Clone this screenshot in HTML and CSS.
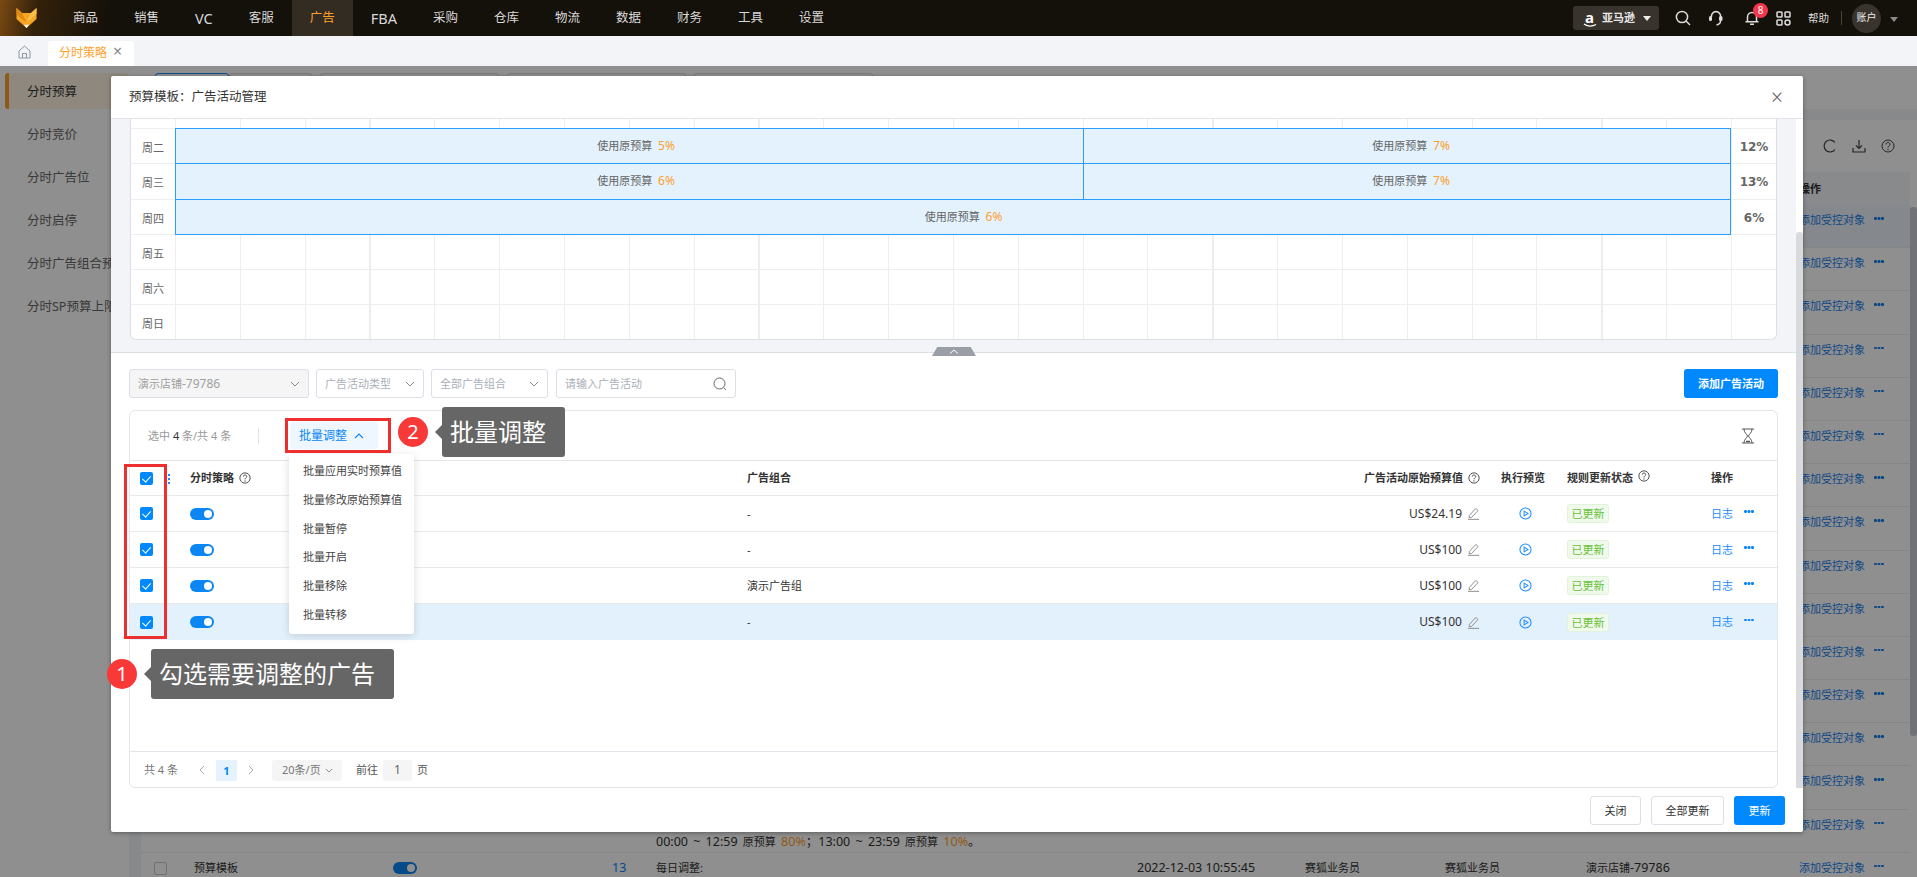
FILE: index.html
```html
<!DOCTYPE html>
<html lang="zh-CN">
<head>
<meta charset="utf-8">
<title>分时策略</title>
<link rel="stylesheet" href="styles.css">
</head>
<body>
<svg class="defs" width="0" height="0">
  <symbol id="help" viewBox="0 0 14 14"><circle cx="7" cy="7" r="6" fill="none" stroke="currentColor" stroke-width="1"/><path d="M5 5.400C5 4.200 5.900 3.500 7 3.500s2 .7 2 1.800c0 1.500-2 1.600-2 3.300" fill="none" stroke="currentColor" stroke-width="1"/><circle cx="7" cy="10.400" r=".7" fill="currentColor"/></symbol>
  <symbol id="pencil" viewBox="0 0 14 14"><path d="M2.500 9.300 8.800 2.200c.5-.5 1-.5 1.500-.1l.9.8c.5.4.5 1 .1 1.500L5 11.200l-2.700.4z" fill="none" stroke="#888" stroke-width="1"/><path d="M1 13.300h12" stroke="#888" stroke-width="1"/></symbol>
  <symbol id="play" viewBox="0 0 14 14"><circle cx="7" cy="7" r="6" fill="none" stroke="#1a8cff" stroke-width="1.100"/><path d="M5.500 4.400 9.700 7l-4.200 2.600z" fill="none" stroke="#1a8cff" stroke-width="1.100"/></symbol>
  <symbol id="chev" viewBox="0 0 10 6"><path d="M1 1l4 4 4-4" fill="none" stroke="currentColor" stroke-width="1"/></symbol>
</svg>

<header class="topbar">
  <svg class="logo" viewBox="0 0 20 20" width="21" height="20"><path d="M0 0l5.500 5h9L20 0v11l-10 9-10-9z" fill="#f5a623"/><path d="M0 0l5.500 5L10 14 5 11 0 6z" fill="#e08a12"/><path d="M20 0l-5.500 5L10 14l5-3 5-5z" fill="#fbbe4a"/><path d="M7.500 16.800 10 20l2.500-3.200z" fill="#fff"/></svg>
  <nav class="nav">
    <a>商品</a><a>销售</a><a class="lat">VC</a><a>客服</a><a class="active">广告</a><a class="lat">FBA</a><a>采购</a><a>仓库</a><a>物流</a><a>数据</a><a>财务</a><a>工具</a><a>设置</a>
  </nav>
  <div class="top-right">
    <div class="market"><span class="amz">a<svg width="14" height="5" viewBox="0 0 14 5"><path d="M1 1c3 2.500 8 2.800 12 .5" fill="none" stroke="#fff" stroke-width="1.300"/></svg></span><span>亚马逊</span><i class="caret"></i></div>
    <svg class="ti ti-search" width="16" height="16" viewBox="0 0 16 16"><circle cx="7" cy="7" r="5.600" fill="none" stroke="#ddd" stroke-width="1.500"/><path d="M11 11l4 4" stroke="#ddd" stroke-width="1.500"/></svg>
    <svg class="ti ti-head" width="16" height="16" viewBox="0 0 16 16"><path d="M3.500 7A4.700 4.700 0 0 1 8 1.500 4.700 4.700 0 0 1 12.500 7" fill="none" stroke="#ddd" stroke-width="1.500"/><rect x="1" y="6" width="3" height="5" rx="1.500" fill="#ddd"/><rect x="11" y="6" width="3.500" height="5" rx="1.500" fill="#ddd"/><path d="M12.500 11c0 2.500-1.500 3.500-4 4" fill="none" stroke="#ddd" stroke-width="1.500"/></svg>
    <div class="bell">
      <svg width="16" height="16" viewBox="0 0 16 16"><path d="M3.500 11.500V7a4.500 4.500 0 0 1 9 0v4.500M1.500 11.800h13M6 14.300h4" fill="none" stroke="#ddd" stroke-width="1.500"/></svg>
      <b class="badge">8</b>
    </div>
    <svg class="ti ti-grid" width="15" height="15" viewBox="0 0 15 15"><g fill="none" stroke="#ddd" stroke-width="1.500"><rect x="1" y="1" width="5" height="5" rx=".8"/><rect x="9" y="1" width="5" height="5" rx=".8"/><rect x="1" y="9" width="5" height="5" rx=".8"/><circle cx="11.500" cy="11.500" r="2.500"/></g></svg>
    <span class="help-link">帮助</span>
    <i class="vline"></i>
    <span class="avatar">账户</span>
    <i class="caret caret-dim"></i>
  </div>
</header>

<div class="tabbar">
  <svg class="home" width="13" height="14" viewBox="0 0 13 14"><path d="M1 6l5.500-5L12 6v7H1z" fill="none" stroke="#8d95a3"/><path d="M4.500 13V8.500h4V13" fill="none" stroke="#8d95a3"/></svg>
  <div class="tab">分时策略<span class="tab-x">×</span></div>
</div>

<main class="page">
  <aside class="side">
    <a class="on">分时预算</a><a>分时竞价</a><a>分时广告位</a><a>分时启停</a><a>分时广告组合预算</a><a>分时SP预算上限</a>
  </aside>
  <section class="content">
    <div class="content-head"><span class="ctab ctab-on"></span><span class="ctab ctab-b"></span><span class="ctab ctab-c"></span><span class="ctab ctab-c"></span><span class="ctab ctab-c"></span></div>
    <div class="bg-card">
      <div class="bg-main">
        <div class="bg-tools">
          <svg width="14" height="14" viewBox="0 0 14 14"><path d="M12 3.500A6 6 0 1 0 12 10.500" fill="none" stroke="#444" stroke-width="1.200"/></svg>
          <svg width="14" height="14" viewBox="0 0 14 14"><path d="M7 1v8M4 6.500 7 9.500l3-3M1 9v4h12V9" fill="none" stroke="#444" stroke-width="1.200"/></svg>
          <svg width="14" height="14" class="bg-help"><use href="#help"/></svg>
        </div>
        <div class="bg-head"><span class="bg-action">操作</span></div>
        <div class="bg-row bg-hover"><span class="bg-action"><a>添加受控对象</a><i class="more"></i></span></div>
        <div class="bg-row"><span class="bg-action"><a>添加受控对象</a><i class="more"></i></span></div>
        <div class="bg-row"><span class="bg-action"><a>添加受控对象</a><i class="more"></i></span></div>
        <div class="bg-row"><span class="bg-action"><a>添加受控对象</a><i class="more"></i></span></div>
        <div class="bg-row"><span class="bg-action"><a>添加受控对象</a><i class="more"></i></span></div>
        <div class="bg-row"><span class="bg-action"><a>添加受控对象</a><i class="more"></i></span></div>
        <div class="bg-row"><span class="bg-action"><a>添加受控对象</a><i class="more"></i></span></div>
        <div class="bg-row"><span class="bg-action"><a>添加受控对象</a><i class="more"></i></span></div>
        <div class="bg-row"><span class="bg-action"><a>添加受控对象</a><i class="more"></i></span></div>
        <div class="bg-row"><span class="bg-action"><a>添加受控对象</a><i class="more"></i></span></div>
        <div class="bg-row"><span class="bg-action"><a>添加受控对象</a><i class="more"></i></span></div>
        <div class="bg-row"><span class="bg-action"><a>添加受控对象</a><i class="more"></i></span></div>
        <div class="bg-row"><span class="bg-action"><a>添加受控对象</a><i class="more"></i></span></div>
        <div class="bg-row"><span class="bg-action"><a>添加受控对象</a><i class="more"></i></span></div>
        <div class="bg-row bg-rule-row">
          <span class="bg-rule">00:00 ~ 12:59 <u>原预算</u> <em>80%</em>；13:00 ~ 23:59 <u>原预算</u> <em>10%</em>。</span>
          <span class="bg-action"><a>添加受控对象</a><i class="more"></i></span>
        </div>
        <div class="bg-row">
          <span class="bg-cb"></span><span>预算模板</span><span class="switch bg-switch"></span><span class="bg-num">13</span><span>每日调整:</span><span class="n">2022-12-03 10:55:45</span><span>赛狐业务员</span><span>赛狐业务员</span><span>演示店铺<b class="n">-79786</b></span>
          <span class="bg-action"><a>添加受控对象</a><i class="more"></i></span>
        </div>
      </div>
      <div class="bg-scroll"><i></i></div>
    </div>
  </section>
</main>

<div class="overlay"></div>

<div class="modal">
  <div class="modal-head"><span>预算模板：广告活动管理</span><span class="modal-x">×</span></div>
  <div class="modal-body">
    <div class="modal-scroll">
      <div class="sched-wrap">
        <div class="sched">
          <div class="wk wk-top"><span class="wk-l"></span><div class="wk-h"></div><span class="wk-p"></span></div>
          <div class="wk"><span class="wk-l">周二</span><div class="wk-h"><div class="blk b14">使用原预算 <em>5%</em></div><div class="blk b10">使用原预算 <em>7%</em></div></div><span class="wk-p">12%</span></div>
          <div class="wk"><span class="wk-l">周三</span><div class="wk-h"><div class="blk b14">使用原预算 <em>6%</em></div><div class="blk b10">使用原预算 <em>7%</em></div></div><span class="wk-p">13%</span></div>
          <div class="wk"><span class="wk-l">周四</span><div class="wk-h"><div class="blk b24">使用原预算 <em>6%</em></div></div><span class="wk-p">6%</span></div>
          <div class="wk"><span class="wk-l">周五</span><div class="wk-h"></div><span class="wk-p"></span></div>
          <div class="wk"><span class="wk-l">周六</span><div class="wk-h"></div><span class="wk-p"></span></div>
          <div class="wk"><span class="wk-l">周日</span><div class="wk-h"></div><span class="wk-p"></span></div>
        </div>
        <div class="collapse"><svg width="10" height="5" viewBox="0 0 10 5"><path d="M1 4.500 5 1l4 3.500" fill="none" stroke="#fff"/></svg></div>
      </div>

      <div class="lower">
        <div class="filters">
          <div class="sel sel-a sel-off"><span>演示店铺<b class="n12">-79786</b></span><svg width="10" height="6"><use href="#chev"/></svg></div>
          <div class="sel sel-b"><span>广告活动类型</span><svg width="10" height="6"><use href="#chev"/></svg></div>
          <div class="sel sel-c"><span>全部广告组合</span><svg width="10" height="6"><use href="#chev"/></svg></div>
          <div class="sel sel-d"><span>请输入广告活动</span><svg width="14" height="14" viewBox="0 0 14 14"><circle cx="6.500" cy="6.500" r="5.500" fill="none" stroke="#666"/><path d="M10.500 10.500 13 13" stroke="#666"/></svg></div>
          <button class="btn-primary btn-add">添加广告活动</button>
        </div>

        <div class="card">
          <div class="toolbar">
            <span class="count">选中 <b>4</b> 条/共 4 条</span>
            <i class="tb-line"></i>
            <div class="batch">批量调整<svg width="10" height="6" viewBox="0 0 10 6"><path d="M1 5l4-4 4 4" fill="none" stroke="#0a86f5" stroke-width="1.100"/></svg></div>
            <svg class="hourglass" width="14" height="16" viewBox="0 0 14 16"><path d="M1 1h12M1 15h12M3 1c0 4 3 5 3.500 7C6 10 3 11 3 15M11 1c0 4-3 5-3.500 7C8 10 11 11 11 15" fill="none" stroke="#555"/><path d="M5 13.500h4" stroke="#555" stroke-width="1.500"/></svg>
          </div>
          <div class="trow thead">
            <span class="c-chk"><i class="cb"></i><i class="vdots"></i></span>
            <span class="c-name">分时策略<svg class="q" width="12" height="12"><use href="#help"/></svg></span>
            <span>广告组合</span>
            <span class="c-budget">广告活动原始预算值<svg class="q" width="12" height="12"><use href="#help"/></svg></span>
            <span class="c-prev">执行预览</span>
            <span>规则更新状态<svg class="q" width="12" height="12"><use href="#help"/></svg></span>
            <span>操作</span>
          </div>
          <div class="trow">
            <span class="c-chk"><i class="cb"></i></span><span class="c-name"><i class="switch"></i></span><span>-</span>
            <span class="c-budget"><b class="amt">US$24.19</b><svg class="pen" width="13" height="13"><use href="#pencil"/></svg></span>
            <span class="c-prev c-prev-i"><svg width="13" height="13"><use href="#play"/></svg></span><span><i class="tag">已更新</i></span>
            <span class="c-op"><a>日志</a><i class="more"></i></span>
          </div>
          <div class="trow">
            <span class="c-chk"><i class="cb"></i></span><span class="c-name"><i class="switch"></i></span><span>-</span>
            <span class="c-budget"><b class="amt">US$100</b><svg class="pen" width="13" height="13"><use href="#pencil"/></svg></span>
            <span class="c-prev c-prev-i"><svg width="13" height="13"><use href="#play"/></svg></span><span><i class="tag">已更新</i></span>
            <span class="c-op"><a>日志</a><i class="more"></i></span>
          </div>
          <div class="trow">
            <span class="c-chk"><i class="cb"></i></span><span class="c-name"><i class="switch"></i></span><span>演示广告组</span>
            <span class="c-budget"><b class="amt">US$100</b><svg class="pen" width="13" height="13"><use href="#pencil"/></svg></span>
            <span class="c-prev c-prev-i"><svg width="13" height="13"><use href="#play"/></svg></span><span><i class="tag">已更新</i></span>
            <span class="c-op"><a>日志</a><i class="more"></i></span>
          </div>
          <div class="trow trow-on">
            <span class="c-chk"><i class="cb"></i></span><span class="c-name"><i class="switch"></i></span><span>-</span>
            <span class="c-budget"><b class="amt">US$100</b><svg class="pen" width="13" height="13"><use href="#pencil"/></svg></span>
            <span class="c-prev c-prev-i"><svg width="13" height="13"><use href="#play"/></svg></span><span><i class="tag">已更新</i></span>
            <span class="c-op"><a>日志</a><i class="more"></i></span>
          </div>
          <div class="tspace"></div>
          <div class="pager">
            <span class="p-total">共 4 条</span>
            <svg class="p-arrow" width="6" height="10" viewBox="0 0 6 10"><path d="M5 1 1 5l4 4" fill="none" stroke="#aaa"/></svg>
            <span class="p-cur">1</span>
            <svg class="p-arrow" width="6" height="10" viewBox="0 0 6 10"><path d="M1 1l4 4-4 4" fill="none" stroke="#aaa"/></svg>
            <span class="p-size">20条/页<svg width="8" height="5"><use href="#chev"/></svg></span>
            <span class="p-go">前往</span><span class="p-in">1</span><span>页</span>
          </div>
        </div>
      </div>
    </div>
    <div class="m-scroll"><i></i></div>
  </div>
  <div class="modal-foot">
    <button class="btn btn-close">关闭</button>
    <button class="btn btn-all">全部更新</button>
    <button class="btn-primary btn-up">更新</button>
  </div>
</div>

<div class="menu">
  <a>批量应用实时预算值</a><a>批量修改原始预算值</a><a>批量暂停</a><a>批量开启</a><a>批量移除</a><a>批量转移</a>
</div>

<div class="redbox rb-batch"></div>
<div class="redbox rb-check"></div>
<div class="dot dot-1">1</div>
<div class="tip tip-1">勾选需要调整的广告</div>
<div class="dot dot-2">2</div>
<div class="tip tip-2">批量调整</div>
</body>
</html>
```

FILE: styles.css
```css
* { box-sizing: border-box; }
html, body { margin: 0; height: 100%; }
body {
  width: 1917px; height: 877px; overflow: hidden; position: relative;
  display: flex; flex-direction: column;
  font: 11px/16px "Noto Sans", "Noto Sans CJK SC", sans-serif;
  color: #333; background: #fff;
}
a { color: inherit; text-decoration: none; }
i, em, b { font-style: normal; }
u { text-decoration: none; font-size: 11px; }
.defs { position: absolute; }
button { font: inherit; cursor: pointer; }
.more {
  display: block; flex: none; width: 2.5px; height: 2.5px; border-radius: 50%; background: currentColor;
  box-shadow: 3.5px 0 currentColor, 7px 0 currentColor;
}

/* top bar */
.topbar {
  height: 36px; flex: none; display: flex; align-items: center;
  background: linear-gradient(100deg, #7a4a12 0, #33210a 38px, #14100a 110px);
  color: #d9d9d9;
}
.logo { margin: 0 18px 0 16px; flex: none; }
.nav { display: flex; height: 36px; }
.nav a { padding: 0 18px; line-height: 36px; font-size: 12.5px; }
.nav .lat { font-size: 14.5px; }
.nav .active { background: #332c22; color: #ff9f2e; }
.top-right { margin-left: auto; display: flex; align-items: center; }
.market {
  width: 86px; height: 24px; margin-right: 16px; padding-left: 10px;
  display: flex; align-items: center; background: #38332c; border-radius: 3px;
  font-size: 11px; font-weight: 700; color: #e8e8e8;
}
.amz { position: relative; width: 19px; font-size: 15px; line-height: 18px; color: #fff; padding-left: 2px; margin-top: -3px; }
.amz svg { position: absolute; left: 0; top: 15px; }
.caret { display: block; width: 0; height: 0; margin-left: 8px; border: 4px solid transparent; border-top: 5px solid #eee; border-bottom: 0; }
.caret-dim { border-top-color: #8a8a8a; margin: 2px 19px 0 9px; }
.ti { flex: none; }
.ti-search { margin-right: 17px; }
.ti-head { margin-right: 20px; }
.bell { position: relative; width: 16px; height: 16px; margin-right: 16px; }
.badge {
  position: absolute; left: 9px; top: -7px; width: 15px; height: 15px; border-radius: 50%;
  background: #f5364a; color: #fff; font-size: 10px; line-height: 15px; font-weight: 400; text-align: center;
}
.ti-grid { margin-right: 17px; }
.help-link { font-size: 10.5px; color: #ddd; }
.vline { width: 1px; height: 14px; background: #444; margin: 0 10px 0 12px; }
.avatar {
  width: 29px; height: 29px; border-radius: 50%; background: #38332c; color: #eee;
  font-size: 10px; line-height: 27px; text-align: center;
}

/* tab bar */
.tabbar { height: 30px; flex: none; background: #f2f4f8; display: flex; align-items: flex-end; padding-left: 18px; }
.home { margin: 0 17px 7px 0; }
.tab {
  width: 86px; height: 25px; padding-left: 11px; background: #fff; border-radius: 3px 3px 0 0;
  color: #ff9f2e; font-size: 12px; line-height: 23px; display: flex;
}
.tab-x { margin-left: 6px; color: #888; font-size: 16px; line-height: 20px; }

/* page behind the dialog */
.page { flex: 1; display: flex; min-height: 0; background: #f2f4f8; }
.side { width: 129px; flex: none; background: #fff; padding-top: 7px; overflow: hidden; white-space: nowrap; }
.side a { display: block; height: 43px; padding-left: 27px; line-height: 40px; font-size: 12.500px; color: #666; }
.side .on { height: 36px; margin: 0 0 6px 5px; padding-left: 18px; line-height: 38px; background: #fff3e0; border-left: 4px solid #ff9f2e; border-radius: 3px; color: #333; }
.content { flex: 1; min-width: 0; padding-left: 12px; display: flex; flex-direction: column; }
.content-head { height: 43px; flex: none; margin-left: -12px; padding: 7px 0 0 26px; display: flex; gap: 8px; background: #fff; }
.ctab { height: 30px; border: 1px solid #d9d9d9; border-radius: 3px; width: 179px; }
.ctab-on { width: 74px; border-color: #1a8cff; }
.ctab-b { width: 83px; margin-left: -8px; }
.bg-card { flex: 1; min-height: 0; margin-top: 11px; background: #fff; display: flex; }
.bg-main { flex: 1; min-width: 0; }
.bg-scroll { width: 7px; flex: none; padding-top: 87px; }
.bg-scroll i { display: block; width: 7px; height: 529px; background: #c8ccd4; border-radius: 3px; }
.bg-tools { height: 52px; display: flex; justify-content: flex-end; align-items: center; gap: 15px; padding: 0 15px 0 0; color: #444; }
.bg-head { height: 33px; background: #f5f6fa; display: grid; grid-template-columns: 1658px 1fr; align-items: center; font-weight: 700; font-size: 11px; }
.bg-head .bg-action { grid-column: 2; }
.bg-row {
  height: 43.2px; border-bottom: 1px solid #eee; padding-top: 6px;
  display: grid; grid-template-columns: 53px 199px 219px 44px 481px 168px 140px 141px 213px 1fr;
  font-size: 11px; line-height: 18px;
}
.n { font-size: 12.500px; font-weight: 400; }
.n12 { font-size: 12px; font-weight: 400; }
.bg-hover { background: #eef3f9; }
.bg-cb { width: 13px; height: 13px; margin: 3px 0 0 13px; border: 1px solid #ccc; border-radius: 2px; }
.bg-switch { margin-top: 3px; }
.bg-num { color: #0088ff; font-size: 12.500px; }
.bg-action { grid-column: 10; display: flex; align-items: flex-start; white-space: nowrap; color: #0d7ce8; }
.bg-action a { color: #1a82ee; width: 75px; }
.bg-action .more { margin-top: 6px; }
.bg-head .bg-action { color: #333; }
.bg-rule { grid-column: 1 / 10; padding: 17px 0 0 515px; white-space: nowrap; font-size: 12.500px; word-spacing: 2px; }
.bg-rule em { color: #ff9f2e; }

.overlay { position: absolute; left: 0; right: 0; top: 66px; bottom: 0; background: rgba(0, 0, 0, .44); }

/* dialog */
.modal {
  position: absolute; left: 111px; top: 76px; width: 1692px; height: 756px;
  background: #fff; border-radius: 2px; display: flex; flex-direction: column;
  box-shadow: 0 1px 4px rgba(0, 0, 0, .35);
}
.modal-head {
  height: 43px; flex: none; padding: 0 20px 0 18px; display: flex; justify-content: space-between; align-items: center;
  border-bottom: 1px solid #e2e4e8; font-size: 12.500px;
}
.modal-x { font-size: 21px; font-weight: 300; color: #666; }
.modal-body { flex: 1; min-height: 0; display: flex; }
.modal-scroll { flex: 1; min-width: 0; display: flex; flex-direction: column; }
.m-scroll { width: 7px; flex: none; padding-top: 113px; }
.m-scroll i { display: block; height: 556px; background: #d8dade; border-radius: 3px 3px 0 0; }
.sched-wrap {
  position: relative; height: 234px; flex: none; padding: 0 19px; background: #f2f4f8;
  border-bottom: 1px solid #dcdee2;
}
.sched { height: 221px; background: #fff; border: solid #dcdfe6; border-width: 0 1px 1px; border-radius: 0 0 6px 6px; overflow: hidden; }
.wk { height: 35.300px; display: flex; border-top: 1px solid #eee; }
.wk-top { height: 9px; border-top: 0; }
.wk-l { width: 44px; flex: none; padding-top: 9px; text-align: center; color: #666; font-size: 11px; line-height: 20px; }
.wk-h {
  width: 1556px; flex: none; display: flex;
  background:
    linear-gradient(#ededed, #ededed) 194px 0 / 2px 100% no-repeat,
    linear-gradient(#ededed, #ededed) 583px 0 / 2px 100% no-repeat,
    linear-gradient(#ededed, #ededed) 1037px 0 / 2px 100% no-repeat,
    linear-gradient(#ededed, #ededed) 1426px 0 / 2px 100% no-repeat,
    repeating-linear-gradient(to right, #eee 0 1px, transparent 1px 64.830px);
}
.wk-p {
  flex: 1; border-left: 1px solid #eee; text-align: center; padding-top: 8px;
  font: 700 12px/20px "DejaVu Sans", sans-serif; color: #666;
}
.blk {
  height: 36.300px; margin-top: -1px; border: 1px solid #2e9bff; background: #e3f2fd;
  display: flex; align-items: center; justify-content: center; gap: 3px; color: #666; font-size: 11px;
  white-space: pre;
}
.blk em { color: #ff9f2e; font-size: 12px; }
.b14 { flex: none; width: 909px; margin-right: -1px; padding-left: 13px; }
.b10 { flex: 1; padding-left: 8px; }
.b24 { flex: 1; padding-left: 21px; }
.collapse {
  position: absolute; left: 821px; bottom: -4px; width: 44px; height: 9px; background: #9a9ea6;
  clip-path: polygon(12% 0, 88% 0, 100% 100%, 0 100%); display: flex; justify-content: center; align-items: center;
}

.lower { flex: 1; min-height: 0; padding: 16px 18px 0 18px; display: flex; flex-direction: column; }
.filters { display: flex; gap: 7px; height: 29px; flex: none; }
.sel {
  height: 29px; padding: 0 8px; display: flex; justify-content: space-between; align-items: center;
  border: 1px solid #dcdfe6; border-radius: 3px; color: #aab0ba; font-size: 11px; white-space: nowrap;
}
.sel svg { color: #888; flex: none; }
.sel-a { width: 180px; }
.sel-off { background: #f5f5f5; color: #a0a0a0; }
.sel-b { width: 108px; }
.sel-c { width: 117px; }
.sel-d { width: 180px; margin-left: 1px; }
.btn-primary { background: #0088ff; color: #fff; border: 0; border-radius: 3px; }
.btn-add { margin-left: auto; width: 94px; height: 29px; font-size: 11px; font-weight: 700; }

.card {
  flex: 1; min-height: 0; margin-top: 12px; border: 1px solid #e3e5ea; border-radius: 6px;
  display: flex; flex-direction: column;
}
.toolbar { height: 50px; flex: none; border-bottom: 1px solid #e3e5ea; display: flex; align-items: center; padding-left: 18px; }
.count { color: #999; width: 110px; }
.count b { color: #333; font-weight: 400; }
.tb-line { width: 1px; height: 16px; background: #e3e5ea; }
.batch {
  margin-left: 31px; width: 88px; height: 27px; padding-left: 9px; background: #eef6ff; border-radius: 3px;
  display: flex; align-items: center; gap: 7px; color: #0a86f5; font-size: 12px;
}
.hourglass { margin-left: auto; margin-right: 22px; }
.trow {
  height: 36px; flex: none; border-bottom: 1px solid #e8eaee;
  display: grid; grid-template-columns: 60px 557px 553px 181px 86px 144px 1fr;
  align-items: center; font-size: 11px;
}
.thead { height: 35px; font-weight: 700; color: #333; }
.trow-on { background: #e3f1fd; border-bottom: 0; }
.c-chk { display: flex; align-items: center; position: relative; padding-left: 10px; }
.cb {
  display: block; width: 13px; height: 13px; border-radius: 2px; background: #0088ff; position: relative;
}
.cb::after {
  content: ""; position: absolute; left: 4px; top: 2px; width: 4px; height: 7px;
  border: solid #fff; border-width: 0 1px 1px 0; transform: rotate(42deg);
}
.vdots { position: absolute; left: 38px; top: 2px; width: 2px; height: 2px; background: #1a8cff; box-shadow: 0 4px #1a8cff, 0 8px #1a8cff; }
.c-name { display: flex; align-items: center; }
.q { margin-left: 5px; color: #333; flex: none; font-weight: 400; }
.switch { display: block; width: 24px; height: 12px; border-radius: 6px; background: #0a86f5; position: relative; }
.switch::after { content: ""; position: absolute; right: 2px; top: 2px; width: 8px; height: 8px; border-radius: 50%; background: #fff; }
.c-budget { display: flex; justify-content: flex-end; align-items: center; padding-right: 1px; }
.amt { font-weight: 400; font-size: 12px; }
.pen { margin-left: 5px; flex: none; }
.c-prev { padding-left: 20px; }
.c-prev-i { display: flex; padding-left: 38px; }
.tag {
  display: inline-block; width: 42px; height: 19px; border: 1px solid #e1f3d8; border-radius: 3px;
  background: #f0f9eb; color: #67c23a; text-align: center; line-height: 17px; font-size: 11px;
}
.c-op { display: flex; align-items: center; color: #1a8cff; }
.c-op a { width: 33px; }
.c-op .more { margin-top: -4px; color: #0a86f5; }
.tspace { flex: 1; min-height: 0; border-bottom: 1px solid #e3e5ea; }
.pager { height: 35px; flex: none; padding: 1px 0 0 14px; display: flex; align-items: center; color: #555; }
.p-total { width: 55px; color: #777; }
.p-arrow { flex: none; }
.p-cur { width: 21px; height: 21px; margin: 0 11px; background: #e6f3ff; color: #0088ff; font-weight: 700; text-align: center; line-height: 21px; }
.p-size {
  width: 70px; height: 21px; margin-left: 18px; padding-left: 10px; background: #f5f5f5; border-radius: 3px;
  display: flex; align-items: center; gap: 4px; color: #777; font-size: 11px;
}
.p-size svg { color: #777; }
.p-go { margin-left: 14px; }
.p-in { width: 29px; height: 21px; margin: 0 5px; background: #f5f5f5; border-radius: 2px; text-align: center; line-height: 19px; color: #666; font-size: 12px; }

.modal-foot { height: 44px; flex: none; display: flex; justify-content: flex-end; gap: 10px; padding: 8px 18px 0 0; }
.btn { height: 29px; background: #fff; border: 1px solid #dcdfe6; border-radius: 3px; font-size: 11px; color: #333; }
.btn-close { width: 51px; }
.btn-all { width: 73px; }
.btn-up { width: 51px; height: 29px; font-size: 11px; }

/* dropdown over the table */
.menu {
  position: absolute; left: 289px; top: 454px; width: 125px; height: 180px; padding-top: 3px;
  background: #fff; border-radius: 3px; box-shadow: 0 2px 8px rgba(0, 0, 0, .14);
}
.menu a { display: block; height: 28.800px; padding-left: 14px; line-height: 28px; font-size: 11px; color: #444; }

/* tutorial callouts */
.redbox { position: absolute; border: 3px solid #ee2f2f; }
.rb-batch { left: 285px; top: 418px; width: 106px; height: 35px; }
.rb-check { left: 124px; top: 464px; width: 43px; height: 175px; }
.dot {
  position: absolute; width: 30px; height: 30px; border-radius: 50%; background: #f93838; color: #fff;
  font-size: 20px; line-height: 30px; text-align: center;
}
.dot-1 { left: 107px; top: 659px; }
.dot-2 { left: 398px; top: 417px; }
.tip {
  position: absolute; height: 50px; padding-left: 8px; background: #666; border-radius: 3px; color: #fff;
  font-size: 24px; line-height: 50px; white-space: nowrap;
}
.tip::before {
  content: ""; position: absolute; left: -7px; top: 18px;
  border: 7px solid transparent; border-right-color: #666; border-left: 0;
}
.tip-1 { left: 151px; top: 649px; width: 243px; }
.tip-2 { left: 442px; top: 407px; width: 123px; }
```
